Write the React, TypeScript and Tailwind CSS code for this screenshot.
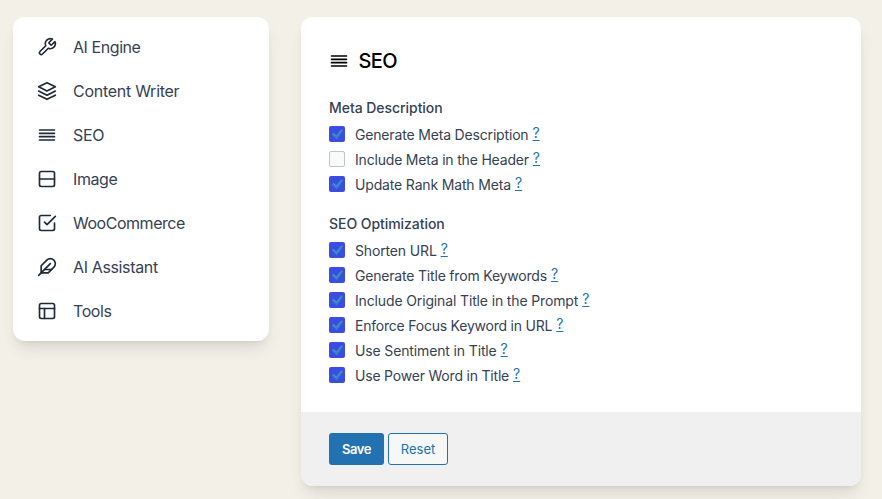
import type { ReactNode } from "react";
import { FiAlignJustify, FiCheckSquare, FiFeather, FiLayers, FiLayout, FiTool } from "react-icons/fi";

function SplitIcon() {
  return (
    <svg width="20" height="20" viewBox="0 0 24 24" fill="none" stroke="currentColor" strokeWidth="2" strokeLinecap="round" strokeLinejoin="round">
      <rect x="3" y="3" width="18" height="18" rx="2" />
      <path d="M3 12h18" />
    </svg>
  );
}

const menu: { label: string; icon: ReactNode; tracking: string }[] = [
  { label: "AI Engine", icon: <FiTool size={20} />, tracking: "tracking-[-0.43px]" },
  { label: "Content Writer", icon: <FiLayers size={20} />, tracking: "tracking-[-0.27px]" },
  { label: "SEO", icon: <FiAlignJustify size={20} />, tracking: "tracking-[-0.3px]" },
  { label: "Image", icon: <SplitIcon />, tracking: "tracking-[-0.4px]" },
  { label: "WooCommerce", icon: <FiCheckSquare size={20} />, tracking: "tracking-[-0.47px]" },
  { label: "AI Assistant", icon: <FiFeather size={20} />, tracking: "tracking-[-0.36px]" },
  { label: "Tools", icon: <FiLayout size={20} />, tracking: "tracking-[-0.4px]" },
];

type Option = { label: string; checked: boolean; tracking: string };

const metaOptions: Option[] = [
  { label: "Generate Meta Description", checked: true, tracking: "tracking-[-0.17px]" },
  { label: "Include Meta in the Header", checked: false, tracking: "tracking-[-0.19px]" },
  { label: "Update Rank Math Meta", checked: true, tracking: "tracking-[-0.16px]" },
];

const seoOptions: Option[] = [
  { label: "Shorten URL", checked: true, tracking: "tracking-[-0.15px]" },
  { label: "Generate Title from Keywords", checked: true, tracking: "tracking-[-0.19px]" },
  { label: "Include Original Title in the Prompt", checked: true, tracking: "tracking-[-0.14px]" },
  { label: "Enforce Focus Keyword in URL", checked: true, tracking: "tracking-[-0.22px]" },
  { label: "Use Sentiment in Title", checked: true, tracking: "tracking-[-0.14px]" },
  { label: "Use Power Word in Title", checked: true, tracking: "tracking-[-0.2px]" },
];

function Check({ checked }: { checked: boolean }) {
  if (!checked) {
    return <span className="size-4 shrink-0 rounded-[2px] border border-[#c3c4c7] bg-[#f9fafb]" />;
  }
  return (
    <span className="size-4 shrink-0 rounded-[2px] bg-[#3b4de0]">
      <svg width="16" height="16" viewBox="0 0 16 16">
        <path d="M12.6 3.5 14 4.6 7.8 13.3 2.8 8.6 4.4 6.9 7.3 9.6Z" fill="#3582c4" stroke="#3582c4" strokeWidth="0.3" />
        <path d="M4.2 7.3 7.4 10.2 12.7 3.8" fill="none" stroke="#54a0d0" strokeWidth="0.7" />
      </svg>
    </span>
  );
}

function Group({ title, options }: { title: string; options: Option[] }) {
  return (
    <section>
      <h3 className="h-5 text-sm font-medium leading-5 tracking-[-0.05px]">{title}</h3>
      <div className="mt-[3px]">
        {options.map((o) => (
          <div key={o.label} className="flex h-[25px] items-start pt-[5px] text-sm leading-5">
            <Check checked={o.checked} />
            <span className={`-mt-px ml-[10px] ${o.tracking}`}>{o.label}</span>
            <a className="-mt-[3px] ml-1 text-[#2271b1] underline decoration-1 underline-offset-2">?</a>
          </div>
        ))}
      </div>
    </section>
  );
}

export default function App() {
  return (
    <div className="flex h-[499px] items-start gap-8 overflow-hidden bg-[#f3f0e8] pl-[13px] pt-[17px] font-['Inter',sans-serif] text-gray-700">
      <nav className="h-[324px] w-64 rounded-xl bg-white px-6 py-2 shadow-lg">
        {menu.map((m) => (
          <div key={m.label} className="flex h-11 items-center gap-4">
            <span className="text-gray-800">{m.icon}</span>
            <span className={`text-base ${m.tracking}`}>{m.label}</span>
          </div>
        ))}
      </nav>
      <main className="h-[469px] w-[560px] overflow-hidden rounded-xl bg-white shadow-lg">
        <div className="h-[395px] px-7 pt-[30px]">
          <h2 className="flex h-7 items-center gap-[9.5px] text-xl font-medium tracking-[-0.6px] text-black">
            <FiAlignJustify size={20} />
            <span>SEO</span>
          </h2>
          <div className="mt-[23px] flex flex-col gap-[18px]">
            <Group title="Meta Description" options={metaOptions} />
            <Group title="SEO Optimization" options={seoOptions} />
          </div>
        </div>
        <footer className="flex h-[74px] items-center gap-1 bg-[#f0f0f0] px-7 text-[13px]">
          <button className="h-8 w-[55px] rounded-[3px] bg-[#2271b1] pt-0.5 font-semibold tracking-[-0.4px] text-white">Save</button>
          <button className="h-8 w-[60px] rounded-[3px] border border-[#2271b1] bg-[#f6f7f7] pt-0.5 text-[#2271b1]">Reset</button>
        </footer>
      </main>
    </div>
  );
}
